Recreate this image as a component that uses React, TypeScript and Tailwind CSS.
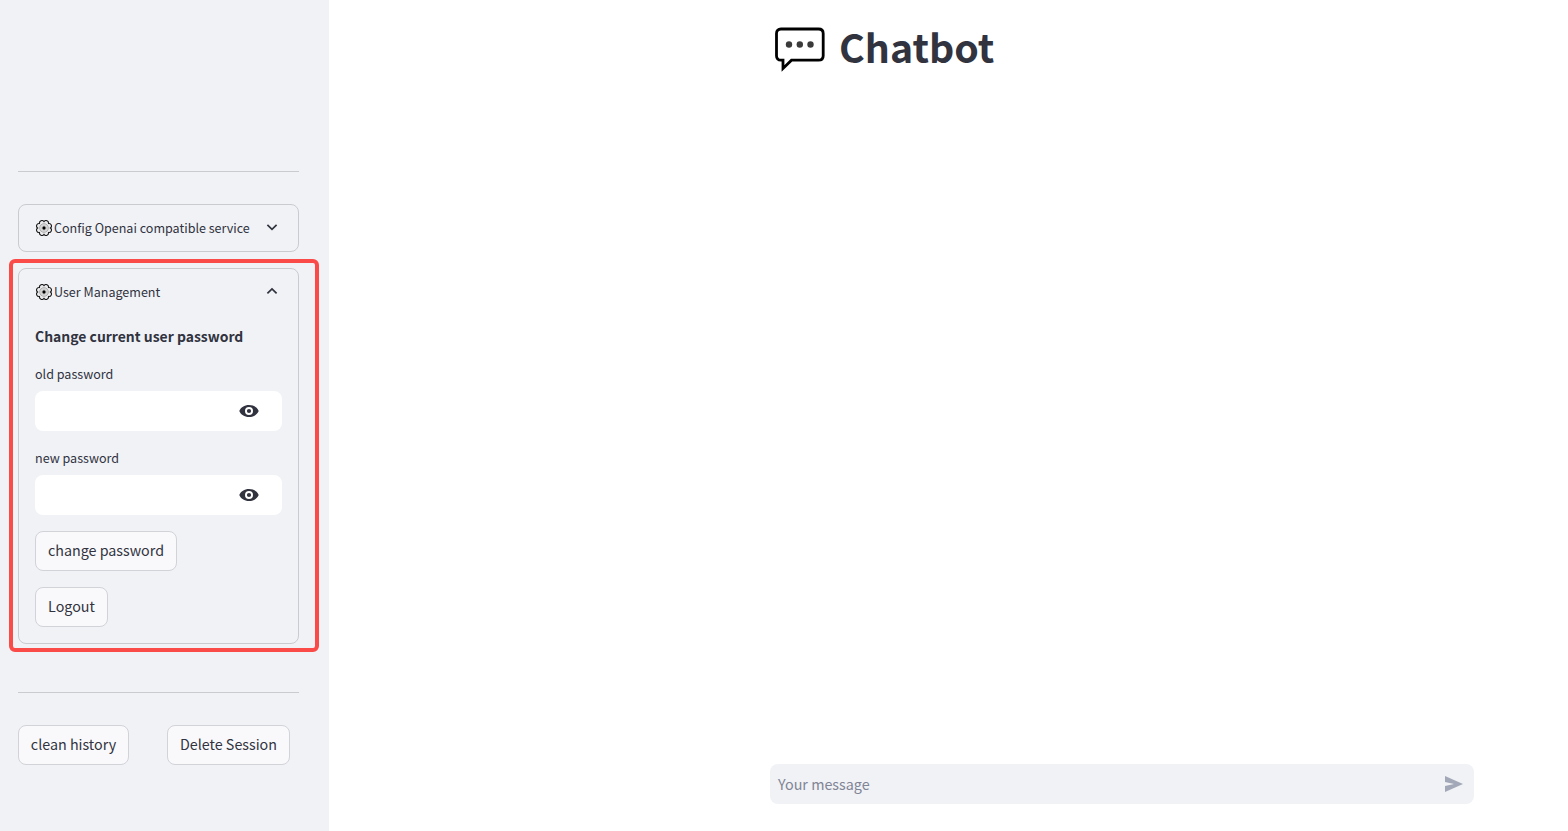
import React from "react";

function Gear() {
  return (
    <svg className="h-4 w-4 shrink-0" viewBox="0 0 16 16" fill="none">
      <path
        d="M8 1.600A2.500 2.500 0 0 1 12.500 3.500A2.500 2.500 0 0 1 14.400 8A2.500 2.500 0 0 1 12.500 12.500A2.500 2.500 0 0 1 8 14.400A2.500 2.500 0 0 1 3.500 12.500A2.500 2.500 0 0 1 1.600 8A2.500 2.500 0 0 1 3.500 3.500A2.500 2.500 0 0 1 8 1.600Z"
        fill="#ececee"
        stroke="#1c1c1c"
        strokeWidth="1.100"
      />
      <circle cx="8" cy="8" r="4.200" stroke="#a0a0a0" strokeWidth="1" />
      <circle cx="8" cy="8" r="2.600" stroke="#c8c8c8" strokeWidth="1" />
      <circle cx="8" cy="8" r="1.700" fill="#000" />
    </svg>
  );
}

function Chevron({ up = false }: { up?: boolean }) {
  return (
    <svg className="ml-auto h-4 w-4 shrink-0" viewBox="0 0 16 16" fill="none" stroke="#31333f" strokeWidth="1.7">
      <path d={up ? "M3.4 9.400 8 4.900l4.600 4.500" : "M3.400 4.800 8 9.300l4.600-4.500"} />
    </svg>
  );
}

function PasswordField({ label }: { label: string }) {
  return (
    <label className="block">
      <span className="block h-[26px] text-[12.55px] leading-[18px]">{label}</span>
      <span className="flex h-10 items-center justify-end rounded-lg bg-white pr-[23px]">
        <svg className="h-3 w-5" viewBox="0 0 20 12">
          <path
            fillRule="evenodd"
            fill="#31333f"
            d="M10 0C5.500 0 1.700 2.400.3 6 1.700 9.600 5.500 12 10 12s8.300-2.400 9.700-6C18.300 2.400 14.500 0 10 0Zm0 2a4 4 0 1 1 0 8 4 4 0 0 1 0-8Zm0 1.900a2.100 2.100 0 1 0 0 4.200 2.100 2.100 0 0 0 0-4.200Z"
          />
        </svg>
      </span>
    </label>
  );
}

function Button({ children, className }: { children: React.ReactNode; className: string }) {
  return (
    <button
      className={`flex h-10 justify-center rounded-lg border border-[#d2d3d8] bg-[#f9f9fb] text-[14.3px] leading-[36px] whitespace-nowrap ${className}`}
    >
      {children}
    </button>
  );
}

export default function App() {
  return (
    <div className="flex h-[831px] w-full overflow-hidden bg-white font-['Noto_Sans_CJK_SC',sans-serif] text-[#31333f]">
      <aside className="w-[329px] shrink-0 bg-[#f0f2f6] pt-[171px] pr-[30px] pl-[18px]">
        <hr className="border-[#cacbd1]" />
        <div className="mt-8 flex h-12 items-center rounded-lg border border-[#cacbd1] pr-[18px] pl-[17px] text-[12.55px]">
          <Gear />
          <span className="ml-[2px] whitespace-nowrap">Config Openai compatible service</span>
          <Chevron />
        </div>
        <section className="relative mt-4 h-[376px] rounded-lg border border-[#cacbd1]">
          <div className="pointer-events-none absolute -top-[10px] -right-[21px] -bottom-[9px] -left-[10px] rounded-[6px] border-4 border-[#fa4b48]" />
          <div className="flex h-[46px] items-center pr-[18px] pl-[17px] text-[12.55px]">
            <Gear />
            <span className="ml-[2px]">User Management</span>
            <Chevron up />
          </div>
          <div className="px-4 pt-[9px]">
            <h2 className="h-[41px] text-[13.95px] leading-[24px] font-bold">Change current user password</h2>
            <PasswordField label="old password" />
            <div className="mt-[18px]">
              <PasswordField label="new password" />
            </div>
            <Button className="mt-4 w-[142px]">change password</Button>
            <Button className="mt-4 w-[73px]">Logout</Button>
          </div>
        </section>
        <hr className="mt-12 border-[#cacbd1]" />
        <div className="mt-8 flex gap-[38px]">
          <Button className="w-[111px]">clean history</Button>
          <Button className="w-[123px]">Delete Session</Button>
        </div>
      </aside>
      <main className="flex flex-1 flex-col justify-between pt-[18px] pr-[94px] pb-[27px] pl-[441px]">
        <h1 className="flex h-[60px] pl-[5px] text-[39.3px] leading-[56px] font-bold">
          <svg className="mt-[9px] h-[46px] w-[50px]" viewBox="0 0 50 46">
            <path
              d="M6 2H43.500Q48.200 2 48.200 6.500V28.700Q48.200 33.200 43.500 33.200H16.500L8 41.500V33.200H6Q1.500 33.200 1.500 28.700V6.500Q1.500 2 6 2Z"
              fill="#fff"
              stroke="#000"
              strokeWidth="2.800"
            />
            <g fill="#3a3a3a">
              <circle cx="14" cy="17.500" r="3.200" />
              <circle cx="24.800" cy="17.500" r="3.200" />
              <circle cx="35.500" cy="17.500" r="3.200" />
            </g>
          </svg>
          <span className="ml-[14px]">Chatbot</span>
        </h1>
        <div className="flex h-10 items-center justify-between rounded-lg bg-[#f0f2f6] pr-[11px] pl-2">
          <span className="text-[14.35px] text-[#808495]">Your message</span>
          <svg className="h-4 w-[18px]" viewBox="0 0 18 16" fill="#a3a8b8">
            <path d="M0 0 18 8 0 16V10L9 8 0 6Z" />
          </svg>
        </div>
      </main>
    </div>
  );
}
